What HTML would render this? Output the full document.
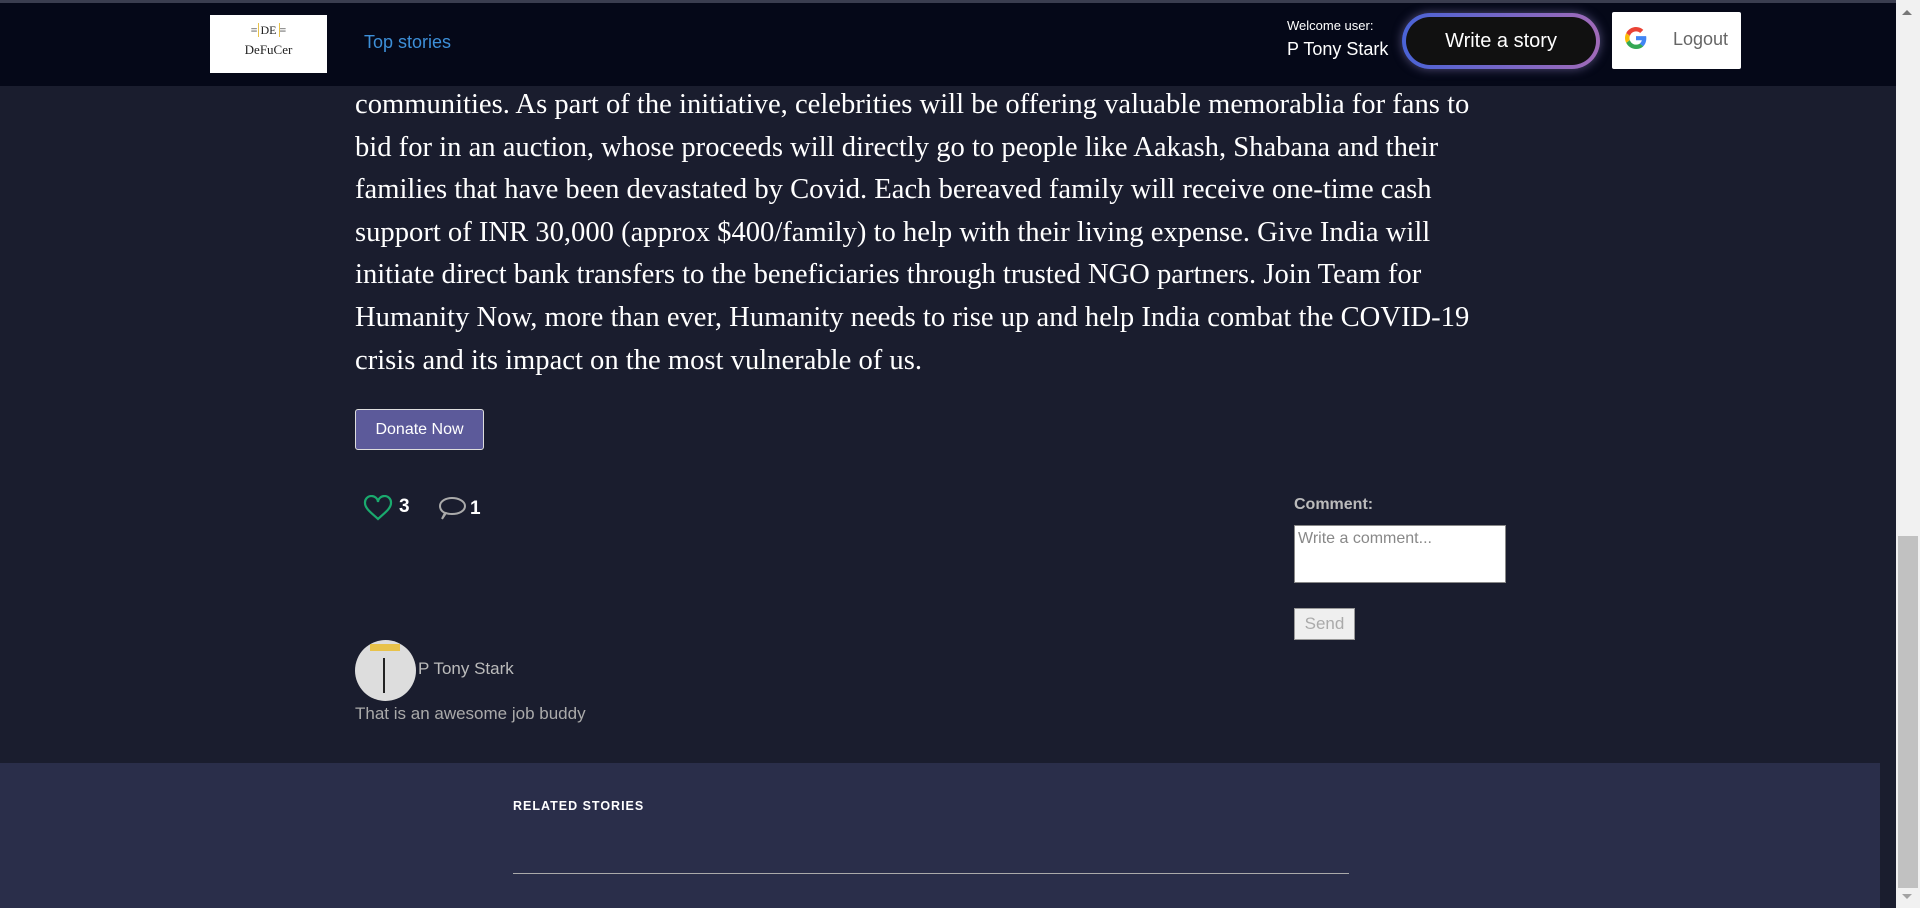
<!DOCTYPE html>
<html><head><meta charset="utf-8"><style>
*{margin:0;padding:0;box-sizing:border-box}
body{width:1920px;height:908px;overflow:hidden;background:#1a1d2e;position:relative;font-family:"Liberation Sans",sans-serif}
.abs{position:absolute}
#hdr{left:0;top:0;width:1896px;height:86px;background:#050818;border-top:3px solid #3a3d4f}
.p{left:355px;color:#fff;font-family:"Liberation Serif",serif;font-size:28.6px;white-space:nowrap;line-height:42.6px}
</style></head><body>
<div class="p abs" style="top:84px">communities. As part of the initiative, celebrities will be offering valuable memorablia for fans to<br>bid for in an auction, whose proceeds will directly go to people like Aakash, Shabana and their<br>families that have been devastated by Covid. Each bereaved family will receive one-time cash<br>support of INR 30,000 (approx $400/family) to help with their living expense. Give India will<br>initiate direct bank transfers to the beneficiaries through trusted NGO partners. Join Team for<br>Humanity Now, more than ever, Humanity needs to rise up and help India combat the COVID-19<br>crisis and its impact on the most vulnerable of us.</div>
<div id="hdr" class="abs"></div>
<div class="abs" style="left:210px;top:15px;width:117px;height:58px;background:#fff;text-align:center;font-family:'Liberation Serif',serif;color:#222">
<div style="margin-top:8px;font-size:12px"><span style="color:#555">≡</span><span style="border:1px solid #e8c24a;border-top:none;border-bottom:none;padding:0 2px">DE</span><span style="color:#555">≡</span></div>
<div style="font-size:13px;margin-top:4px">DeFuCer</div></div>
<div class="abs" style="left:364px;top:32px;color:#3d8fd8;font-size:18px">Top stories</div>
<div class="abs" style="left:1287px;top:18px;color:#fff;font-size:13px">Welcome user:</div>
<div class="abs" style="left:1287px;top:39px;color:#fff;font-size:18px">P Tony Stark</div>
<div class="abs" style="left:1402px;top:13px;width:198px;height:56px;border-radius:28px;background:linear-gradient(90deg,#4a63d6,#a06ab8);padding:4px;box-shadow:0 0 10px rgba(160,150,220,.5)">
<div style="width:100%;height:100%;border-radius:24px;background:#111;color:#fff;font-size:20px;text-align:center;line-height:48px">Write a story</div></div>
<div class="abs" style="left:1612px;top:12px;width:129px;height:57px;background:#fff;border-radius:2px">
<svg class="abs" style="left:13px;top:15px" width="22" height="22" viewBox="0 0 48 48"><path fill="#EA4335" d="M24 9.5c3.5 0 6.6 1.2 9.1 3.6l6.8-6.8C35.8 2.4 30.3 0 24 0 14.6 0 6.6 5.4 2.7 13.3l7.9 6.1C12.5 13.6 17.8 9.5 24 9.5z"/><path fill="#4285F4" d="M46.5 24.5c0-1.6-.1-3.1-.4-4.5H24v9h12.7c-.6 3-2.3 5.5-4.8 7.2l7.7 6c4.5-4.2 6.900-10.3 6.9-17.7z"/><path fill="#FBBC05" d="M10.5 28.6c-.5-1.4-.8-3-.8-4.6s.3-3.2.8-4.6l-7.9-6.1C1 16.6 0 20.2 0 24s.9 7.4 2.7 10.7l7.8-6.1z"/><path fill="#34A853" d="M24 48c6.5 0 11.9-2.1 15.9-5.800l-7.7-6c-2.200 1.5-5 2.3-8.2 2.3-6.2 0-11.5-4.2-13.4-9.9l-7.9 6.1C6.6 42.6 14.6 48 24 48z"/></svg>
<div class="abs" style="left:61px;top:17px;color:#666;font-size:18px">Logout</div></div>
<div class="abs" style="left:1896px;top:0;width:24px;height:908px;background:#f1f1f1"></div>
<div class="abs" style="left:1898px;top:536px;width:20px;height:352px;background:#c1c1c1"></div>
<div class="abs" style="left:1902px;top:10px;width:0;height:0;border:5px solid transparent;border-bottom-color:#777;border-top:none"></div>
<div class="abs" style="left:1902px;top:894px;width:0;height:0;border:5px solid transparent;border-top-color:#a3a3a3;border-bottom:none"></div>
<div class="abs" style="left:355px;top:409px;width:129px;height:41px;background:#5c5a9a;border:1px solid #ddd;border-radius:3px;color:#fff;font-size:16px;text-align:center;line-height:39px">Donate Now</div>
<svg class="abs" style="left:363px;top:495px" width="30" height="26" viewBox="0 0 30 26"><path d="M15 24C10 19 2 14 2 8a6.5 6.5 0 0 1 13-1 6.5 6.5 0 0 1 13 1c0 6-8 11-13 16z" fill="none" stroke="#1aaa6e" stroke-width="2.2"/></svg>
<div class="abs" style="left:399px;top:496px;color:#fff;font-weight:bold;font-size:19px">3</div>
<svg class="abs" style="left:438px;top:496px" width="30" height="26" viewBox="0 0 30 26"><path d="M4 23l3-6C3 15 2 12 2 10c0-5 6-8 12-8s13 3 13 8-6 8-13 8c-2 0-4 0-6-1z" fill="none" stroke="#aaa" stroke-width="2"/></svg>
<div class="abs" style="left:470px;top:498px;color:#fff;font-weight:bold;font-size:19px">1</div>
<div class="abs" style="left:1294px;top:496px;color:#bbb;font-weight:bold;font-size:16px">Comment:</div>
<div class="abs" style="left:1294px;top:525px;width:212px;height:58px;background:#fff;border:1px solid #888;color:#888;font-size:16px;padding:4px 3px">Write a comment...</div>
<div class="abs" style="left:1294px;top:608px;width:61px;height:32px;background:#efefef;border:1px solid #999;color:#aaa;font-size:17px;text-align:center;line-height:30px">Send</div>
<div class="abs" style="left:355px;top:640px;width:61px;height:61px;border-radius:50%;background:#ddd;overflow:hidden">
<div class="abs" style="left:15px;top:4px;width:30px;height:7px;background:#e8c24a"></div>
<div class="abs" style="left:28px;top:18px;width:2px;height:35px;background:#222"></div></div>
<div class="abs" style="left:418px;top:659px;color:#bbb;font-size:17px">P Tony Stark</div>
<div class="abs" style="left:355px;top:704px;color:#aaa;font-size:17px">That is an awesome job buddy</div>
<div class="abs" style="left:0;top:763px;width:1880px;height:145px;background:#2a2e4a"></div>
<div class="abs" style="left:513px;top:799px;color:#fff;font-weight:bold;font-size:12.5px;letter-spacing:1px">RELATED STORIES</div>
<div class="abs" style="left:513px;top:873px;width:836px;height:1px;background:#aaa"></div>
</body></html>
